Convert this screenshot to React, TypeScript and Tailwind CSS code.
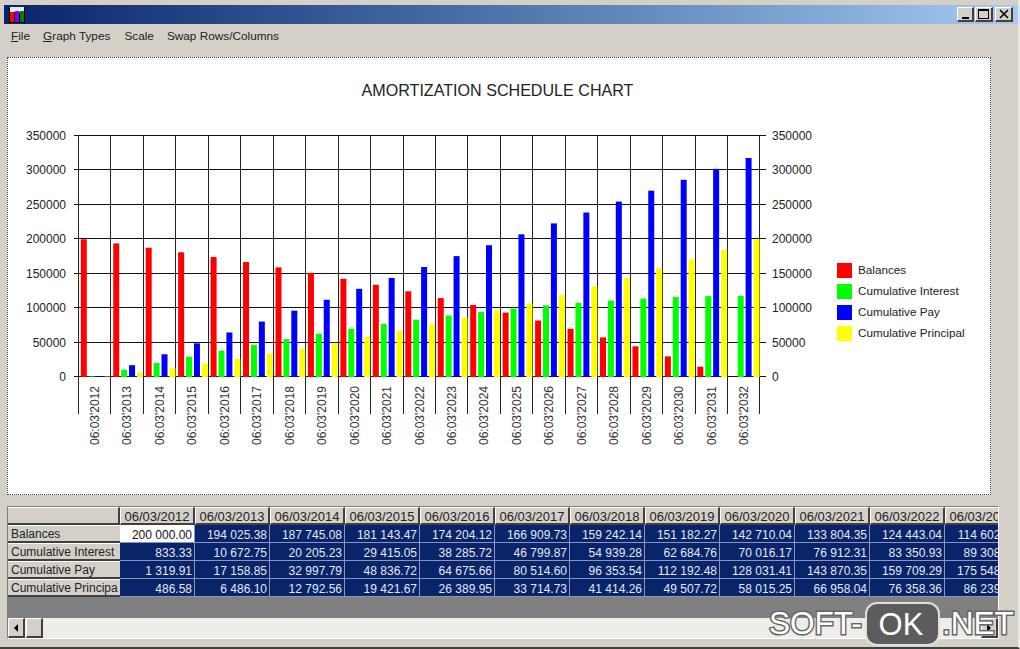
import React from 'react';

const years = Array.from({ length: 21 }, (_, i) => 2012 + i);

const balances = [
  200000, 194025, 187745, 181143, 174204, 166910, 159242, 151182, 142710, 133804, 124443, 114602,
  104500, 93500, 82000, 70000, 57500, 44500, 30000, 15000, 0,
];
const interest = [
  833, 10673, 20205, 29415, 38286, 46800, 54939, 62685, 70016, 76912, 83351, 89308, 94500, 99500,
  104000, 107800, 111000, 114000, 116000, 117500, 118000,
];
const pay = years.map((_, i) => 1320 + 15839 * i);
const principal = [
  487, 6486, 12793, 19422, 26390, 33715, 41414, 49508, 58015, 66958, 76358, 86239, 96500, 107000,
  119000, 132000, 144000, 158000, 171000, 185000, 200000,
];

const series = [
  { name: 'Balances', color: '#ff0000', values: balances },
  { name: 'Cumulative Interest', color: '#00ff00', values: interest },
  { name: 'Cumulative Pay', color: '#0000ff', values: pay },
  { name: 'Cumulative Principal', color: '#ffff00', values: principal },
];

const ticks = [0, 50000, 100000, 150000, 200000, 250000, 300000, 350000];

const columns = [
  '06/03/2012', '06/03/2013', '06/03/2014', '06/03/2015', '06/03/2016', '06/03/2017',
  '06/03/2018', '06/03/2019', '06/03/2020', '06/03/2021', '06/03/2022', '06/03/2023',
];

const rows = [
  {
    name: 'Balances',
    cells: ['200 000.00', '194 025.38', '187 745.08', '181 143.47', '174 204.12', '166 909.73', '159 242.14', '151 182.27', '142 710.04', '133 804.35', '124 443.04', '114 602.12'],
  },
  {
    name: 'Cumulative Interest',
    cells: ['833.33', '10 672.75', '20 205.23', '29 415.05', '38 285.72', '46 799.87', '54 939.28', '62 684.76', '70 016.17', '76 912.31', '83 350.93', '89 308.61'],
  },
  {
    name: 'Cumulative Pay',
    cells: ['1 319.91', '17 158.85', '32 997.79', '48 836.72', '64 675.66', '80 514.60', '96 353.54', '112 192.48', '128 031.41', '143 870.35', '159 709.29', '175 548.23'],
  },
  {
    name: 'Cumulative Principa',
    cells: ['486.58', '6 486.10', '12 792.56', '19 421.67', '26 389.95', '33 714.73', '41 414.26', '49 507.72', '58 015.25', '66 958.04', '76 358.36', '86 239.62'],
  },
];

const PLOT_LEFT = 79;
const STEP = 32.45;
const BASE = 377;
const SCALE = 241 / 350000;

function Chart() {
  return (
    <svg viewBox="8 58 982 436" className="block h-[436px] w-[982px]" fontFamily="'Liberation Sans', Arial, sans-serif">
      <text x="497.5" y="96" fontSize="16.1" textAnchor="middle" fill="#222222">
        AMORTIZATION SCHEDULE CHART
      </text>
      {ticks.map((t) => {
        const y = Math.round(BASE - t * SCALE) - 0.5;
        return (
          <g key={t}>
            <line x1="74" x2="766" y1={y} y2={y} stroke="#111111" />
            <text x="66" y={y + 4} fontSize="12" textAnchor="end" fill="#222222">
              {t}
            </text>
            <text x="772" y={y + 4} fontSize="12" fill="#222222">
              {t}
            </text>
          </g>
        );
      })}
      {Array.from({ length: 22 }, (_, i) => {
        const x = Math.round(PLOT_LEFT + STEP * i) - 0.5;
        return <line key={i} x1={x} x2={x} y1="136" y2="414" stroke="#222222" />;
      })}
      {years.map((year, i) => {
        const x0 = PLOT_LEFT + STEP * i;
        return (
          <g key={year}>
            {series.map((s, j) => {
              const h = s.values[i] * SCALE;
              return (
                <rect key={s.name} x={x0 + 1.8 + j * 7.9} y={BASE - h} width="6" height={h} fill={s.color} />
              );
            })}
            <text
              transform={`translate(${x0 + 20} 445) rotate(-90)`}
              fontSize="12"
              fill="#333333"
            >
              {`06:03'${year}`}
            </text>
          </g>
        );
      })}
      {series.map((s, i) => (
        <g key={s.name}>
          <rect x="837" y={263 + i * 21} width="15" height="15" fill={s.color} />
          <text x="858" y={274 + i * 21} fontSize="11.7" fill="#222222">
            {s.name}
          </text>
        </g>
      ))}
    </svg>
  );
}

function AppIcon() {
  return (
    <svg viewBox="0 0 16 16" className="ml-px h-4 w-4">
      <rect width="16" height="16" fill="#000000" />
      <rect x="1" y="0" width="14" height="5" fill="#e8e8e8" />
      <rect x="1" y="5" width="4" height="10" fill="#ff0000" />
      <rect x="6" y="4" width="4" height="11" fill="#8000ff" />
      <rect x="11" y="4" width="4" height="11" fill="#008000" />
    </svg>
  );
}

function CaptionButton({ children, className }: { children: React.ReactNode; className: string }) {
  return (
    <div
      className={`flex h-[15px] items-center justify-center border-t border-r-2 border-b-2 border-l border-t-white border-r-[#404040] border-b-[#404040] border-l-white bg-[#d4d0c8] ${className}`}
    >
      {children}
    </div>
  );
}

export default function App() {
  return (
    <div className="relative h-[649px] w-[1020px] overflow-hidden border-r-2 border-b-2 border-r-[#e8e6e0] border-b-[#404040] bg-[#d4d0c8] font-['Liberation_Sans',Arial,sans-serif]">
      <div className="mt-[5px] ml-[4px] flex h-[19px] w-[1014px] items-center bg-gradient-to-r from-[#0a246a] to-[#a6caf0] pr-[5px] pl-[4px]">
        <AppIcon />
        <div className="ml-auto flex">
          <CaptionButton className="w-[17px]">
            <div className="mt-[7px] h-[2px] w-[7px] bg-black" />
          </CaptionButton>
          <CaptionButton className="ml-px w-[18px]">
            <div className="h-[10px] w-[11px] border border-t-2 border-black" />
          </CaptionButton>
          <CaptionButton className="ml-[2px] w-[18px]">
            <svg viewBox="0 0 10 10" className="h-[10px] w-[10px]">
              <path d="M1 1 L9 9 M9 1 L1 9" stroke="#000000" strokeWidth="1.6" />
            </svg>
          </CaptionButton>
        </div>
      </div>

      <div className="flex h-[33px] items-start pt-[4px] pl-[11px] text-[11.8px] leading-[16px] text-[#222222]">
        <span><u>F</u>ile</span>
        <span className="ml-[13px]"><u>G</u>raph Types</span>
        <span className="ml-[14px]">Scale</span>
        <span className="ml-[13px]">Swap Rows/Columns</span>
      </div>

      <div className="ml-[7px] w-[984px] border border-dotted border-[#444444] bg-white">
        <Chart />
      </div>

      <div className="mt-[11px] ml-[7px] flex h-[133px] w-[992px] flex-col border border-t-[#808080] border-r-white border-b-white border-l-[#808080] bg-[#808080]">
        <div className="w-full overflow-hidden">
          <table className="w-[1012px] table-fixed border-separate border-spacing-0 text-[12px] leading-[14px]">
            <colgroup>
              <col className="w-[112px]" />
              {columns.map((c) => (
                <col key={c} className="w-[75px]" />
              ))}
            </colgroup>
            <thead>
              <tr>
                <th className="h-[18px] border-t border-r-2 border-b-2 border-t-white border-r-[#404040] border-b-[#404040] bg-[#d4d0c8]" />
                {columns.map((c) => (
                  <th
                    key={c}
                    className="h-[18px] border-t border-r-2 border-b-2 border-l border-t-white border-r-[#404040] border-b-[#404040] border-l-white bg-[#d4d0c8] pt-[2px] text-center text-[13px] leading-[13px] font-normal whitespace-nowrap text-[#222222]"
                  >
                    {c}
                  </th>
                ))}
              </tr>
            </thead>
            <tbody>
              {rows.map((row, r) => (
                <tr key={row.name}>
                  <td className="h-[18px] overflow-hidden border-t border-b-2 border-t-white border-b-[#404040] bg-[#d4d0c8] pt-[2px] pl-[3px] leading-[13px] whitespace-nowrap text-[#222222]">
                    {row.name}
                  </td>
                  {row.cells.map((cell, c) => (
                    <td
                      key={c}
                      className={
                        r === 0 && c === 0
                          ? 'h-[18px] border-r border-b border-r-[#8496c4] border-b-[#8496c4] bg-white pt-[3px] pr-[2px] text-right whitespace-nowrap text-[#111111]'
                          : 'h-[18px] border-r border-b border-r-[#8496c4] border-b-[#8496c4] bg-[#0a246a] pt-[3px] pr-[2px] text-right whitespace-nowrap text-[#e4e8f4]'
                      }
                    >
                      {cell}
                    </td>
                  ))}
                </tr>
              ))}
            </tbody>
          </table>
        </div>
        <div className="flex-1" />
        <div className="flex h-[20px] bg-[#eeede9]">
          <div className="flex w-[17px] items-center justify-center border-t border-r-2 border-b-2 border-l border-t-white border-r-[#404040] border-b-[#404040] border-l-white bg-[#d4d0c8]">
            <div className="h-0 w-0 border-y-[4px] border-r-[4px] border-y-transparent border-r-black" />
          </div>
          <div className="ml-px w-[17px] border-t border-r-2 border-b-2 border-l border-t-white border-r-[#404040] border-b-[#404040] border-l-white bg-[#d4d0c8]" />
          <div className="ml-auto flex w-[17px] items-center justify-center border-t border-r-2 border-b-2 border-l border-t-white border-r-[#404040] border-b-[#404040] border-l-white bg-[#d4d0c8]">
            <div className="h-0 w-0 border-y-[4px] border-l-[4px] border-y-transparent border-l-black" />
          </div>
        </div>
      </div>

      {/* watermark sits on top of the scrollbar */}
      <div className="absolute top-[602px] left-[769px] flex h-[44px] items-center text-[31.5px] leading-none text-white [-webkit-text-stroke:3px_#666666] [paint-order:stroke_fill]">
        <span className="w-[96px]">SOFT-</span>
        <span className="flex h-[44px] w-[75px] items-center justify-center rounded-[12px] border-2 border-[#e0e0e0] bg-[#5c5c5c] pr-[3px] text-[31px] [-webkit-text-stroke:0]">
          OK
        </span>
        <span className="ml-[2px]">.NET</span>
      </div>
    </div>
  );
}
